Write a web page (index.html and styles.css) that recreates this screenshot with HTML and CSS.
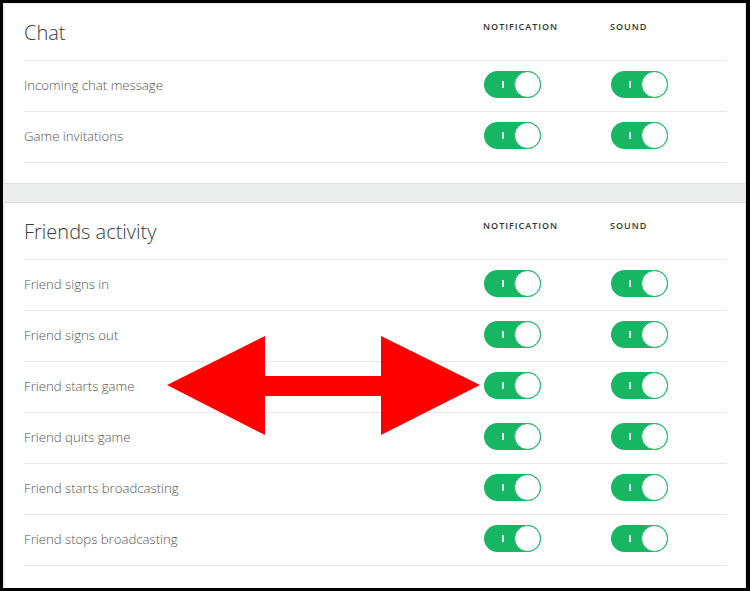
FILE: index.html
```html
<!DOCTYPE html>
<html>
<head>
<meta charset="utf-8">
<link rel="stylesheet" href="styles.css">
</head>
<body>
<div class="frame">
  <div class="inner">
    <section class="section">
      <div class="grid head">
        <h2 class="title">Chat</h2>
        <div class="colhead">NOTIFICATION</div>
        <div class="colhead">SOUND</div>
      </div>
      <div class="grid row">
        <div class="label">Incoming chat message</div>
        <div class="cell"><span class="toggle"><span class="mark"></span><span class="knob"></span></span></div>
        <div class="cell"><span class="toggle"><span class="mark"></span><span class="knob"></span></span></div>
      </div>
      <div class="grid row">
        <div class="label">Game invitations</div>
        <div class="cell"><span class="toggle"><span class="mark"></span><span class="knob"></span></span></div>
        <div class="cell"><span class="toggle"><span class="mark"></span><span class="knob"></span></span></div>
      </div>
    </section>
    <div class="band"></div>
    <section class="section last">
      <div class="grid head">
        <h2 class="title">Friends activity</h2>
        <div class="colhead">NOTIFICATION</div>
        <div class="colhead">SOUND</div>
      </div>
      <div class="grid row">
        <div class="label">Friend signs in</div>
        <div class="cell"><span class="toggle"><span class="mark"></span><span class="knob"></span></span></div>
        <div class="cell"><span class="toggle"><span class="mark"></span><span class="knob"></span></span></div>
      </div>
      <div class="grid row">
        <div class="label">Friend signs out</div>
        <div class="cell"><span class="toggle"><span class="mark"></span><span class="knob"></span></span></div>
        <div class="cell"><span class="toggle"><span class="mark"></span><span class="knob"></span></span></div>
      </div>
      <div class="grid row">
        <div class="label">Friend starts game</div>
        <div class="cell"><span class="toggle"><span class="mark"></span><span class="knob"></span></span></div>
        <div class="cell"><span class="toggle"><span class="mark"></span><span class="knob"></span></span></div>
      </div>
      <div class="grid row">
        <div class="label">Friend quits game</div>
        <div class="cell"><span class="toggle"><span class="mark"></span><span class="knob"></span></span></div>
        <div class="cell"><span class="toggle"><span class="mark"></span><span class="knob"></span></span></div>
      </div>
      <div class="grid row">
        <div class="label">Friend starts broadcasting</div>
        <div class="cell"><span class="toggle"><span class="mark"></span><span class="knob"></span></span></div>
        <div class="cell"><span class="toggle"><span class="mark"></span><span class="knob"></span></span></div>
      </div>
      <div class="grid row">
        <div class="label">Friend stops broadcasting</div>
        <div class="cell"><span class="toggle"><span class="mark"></span><span class="knob"></span></span></div>
        <div class="cell"><span class="toggle"><span class="mark"></span><span class="knob"></span></span></div>
      </div>
    </section>
  </div>
  <svg class="arrow" width="750" height="591" viewBox="0 0 750 591">
    <polygon fill="#ff0000" points="167,385 265,336 265,376 381,376 381,336 480,385 381,435 381,396 265,396 265,435"/>
  </svg>
</div>
</body>
</html>
```

FILE: styles.css
```css
html, body {
  margin: 0;
  padding: 0;
  background: #000;
}
body {
  width: 750px;
  height: 591px;
  overflow: hidden;
  font-family: "Open Sans", "Liberation Sans", sans-serif;
}
.frame {
  position: relative;
  box-sizing: border-box;
  width: 750px;
  height: 591px;
  border-style: solid;
  border-color: #000;
  border-width: 3px 4px 3px 3px;
  background: #fff;
}
.inner {
  box-sizing: border-box;
  height: 100%;
  border-left: 2px solid #ececec;
  border-top: 1px solid #ececec;
  border-right: 1px solid #e6e6e6;
  display: flex;
  flex-direction: column;
}
.section {
  padding: 0 18px 20px 19px;
}
.section.last {
  padding-bottom: 0;
}
.grid {
  display: grid;
  grid-template-columns: 1fr 127px 117px;
  border-bottom: 1px solid #e8e8e8;
}
.head {
  height: 57px;
  box-sizing: border-box;
  padding-top: 17px;
  align-items: start;
}
.title {
  margin: 0;
  font-size: 20px;
  font-weight: 300;
  line-height: 24px;
  color: #3a3a3a;
}
.colhead {
  font-size: 9px;
  font-weight: 600;
  letter-spacing: 1px;
  line-height: 12px;
  color: #333;
}
.row {
  height: 51px;
  box-sizing: border-box;
  padding-bottom: 3px;
  align-items: center;
}
.label {
  font-size: 13.2px;
  font-weight: 300;
  color: #555;
  letter-spacing: 0;
}
.cell {
  display: flex;
  align-items: center;
  padding-left: 1px;
}
.toggle {
  position: relative;
  display: block;
  width: 57px;
  height: 27px;
  border-radius: 14px;
  background: #17b663;
}
.mark {
  position: absolute;
  left: 18px;
  top: 10px;
  width: 2px;
  height: 7px;
  background: #e8fff0;
}
.knob {
  position: absolute;
  right: 0;
  top: 0;
  box-sizing: border-box;
  width: 27px;
  height: 27px;
  border-radius: 50%;
  background: #fff;
  border: 1.5px solid #17b663;
}
.band {
  height: 20px;
  box-sizing: border-box;
  background: #eceeee;
  border-top: 1px solid #e0e2e2;
  border-bottom: 1px solid #dcdede;
}
.arrow {
  position: absolute;
  left: -3px;
  top: -3px;
  pointer-events: none;
}
```
